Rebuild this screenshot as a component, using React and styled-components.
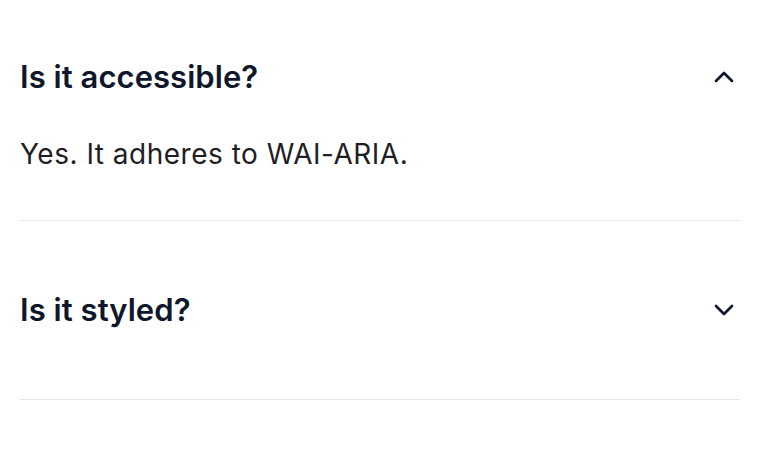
import React, { useState } from "react";
import styled, { createGlobalStyle } from "styled-components";

const Global = createGlobalStyle`
  html, body { margin: 0; padding: 0; background: #ffffff; }
  body { font-family: Inter, "Noto Sans", sans-serif; -webkit-font-smoothing: antialiased; }
`;

const Page = styled.div`
  width: 760px;
  padding: 0 20px;
  box-sizing: border-box;
`;

const Item = styled.div`
  border-bottom: 1px solid #e2e8f0;
`;

const Trigger = styled.button`
  display: flex;
  width: 100%;
  align-items: center;
  justify-content: space-between;
  border: 0;
  background: none;
  margin: 0;
  padding: ${(p) => (p.$open ? "59px 0 41px" : "71px 0 71px")};
  font-family: Inter, sans-serif;
  font-size: 31px;
  line-height: 36px;
  font-weight: 600;
  letter-spacing: 0.05px;
  color: #0f172a;
  text-align: left;
  cursor: pointer;
`;

const Content = styled.div`
  padding: 0 0 48px;
  font-family: Inter, sans-serif;
  font-size: 28px;
  line-height: 36px;
  font-weight: 400;
  letter-spacing: 0.5px;
  color: #1e1e24;
`;

const Chevron = ({ up }) => (
  <svg width="32" height="32" viewBox="0 0 24 24" fill="none" stroke="#0f172a" strokeWidth="2" strokeLinecap="round" strokeLinejoin="round">
    {up ? <path d="m18 15-6-6-6 6" /> : <path d="m6 9 6 6 6-6" />}
  </svg>
);

const items = [
  { q: "Is it accessible?", a: "Yes. It adheres to WAI-ARIA." },
  { q: "Is it styled?", a: "Yes. It comes with default styles." },
];

export default function App() {
  const [open, setOpen] = useState(0);
  return (
    <>
      <Global />
      <Page>
        {items.map((it, i) => (
          <Item key={i}>
            <Trigger $open={open === i} onClick={() => setOpen(open === i ? -1 : i)}>
              <span>{it.q}</span>
              <Chevron up={open === i} />
            </Trigger>
            {open === i && <Content>{it.a}</Content>}
          </Item>
        ))}
      </Page>
    </>
  );
}
